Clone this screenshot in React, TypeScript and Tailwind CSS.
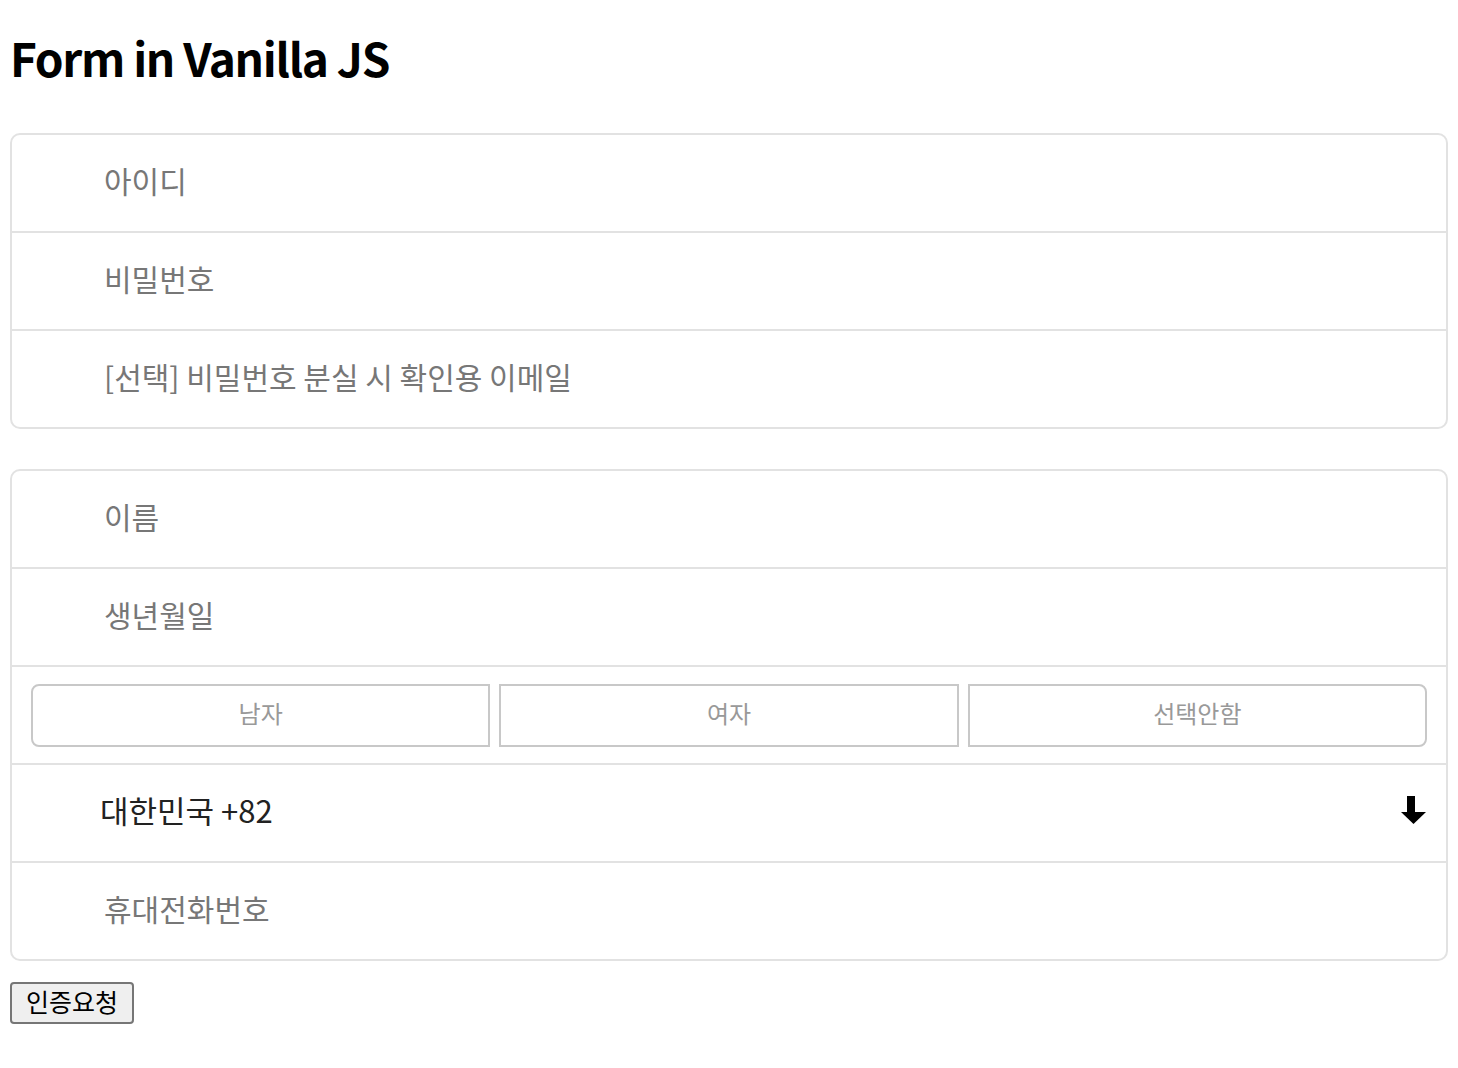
import React from "react"

const font = { fontFamily: '"Noto Sans CJK KR", "Noto Sans", sans-serif' }

function TextRow({ placeholder, last }: { placeholder: string; last?: boolean }) {
  return (
    <div className={`flex items-center ${last ? "h-[96px]" : "h-[98px] border-b-2 border-[#e2e2e2]"}`}>
      <input
        placeholder={placeholder}
        className="h-full w-full bg-transparent pb-[6px] pl-[92px] text-[30px] text-[#222] outline-none placeholder:text-[#777]"
        style={font}
      />
    </div>
  )
}

function DownArrow() {
  return (
    <svg width="26" height="28" viewBox="0 0 26 28" className="shrink-0">
      <rect x="6" y="0" width="8" height="17" fill="#000" />
      <polygon points="0,16 25,16 12.5,28" fill="#000" />
    </svg>
  )
}

export default function App() {
  return (
    <div className="min-h-screen bg-white px-[10px] pt-[29px]" style={font}>
      <h1 className="text-[46px] font-bold leading-[56px] tracking-[-1.3px] text-black">Form in Vanilla JS</h1>

      <form className="mt-[48px]" onSubmit={(e) => e.preventDefault()}>
        <div className="overflow-hidden rounded-[10px] border-2 border-[#e2e2e2]">
          <TextRow placeholder="아이디" />
          <TextRow placeholder="비밀번호" />
          <TextRow placeholder="[선택] 비밀번호 분실 시 확인용 이메일" last />
        </div>

        <div className="mt-[40px] overflow-hidden rounded-[10px] border-2 border-[#e2e2e2]">
          <TextRow placeholder="이름" />
          <TextRow placeholder="생년월일" />
          <div className="flex h-[98px] items-center gap-[9px] border-b-2 border-[#e2e2e2] px-[19px]">
            {["남자", "여자", "선택안함"].map((label, i) => (
              <button
                key={label}
                type="button"
                className={`flex h-[63px] flex-1 items-center justify-center border-2 border-[#c8c8c8] bg-white pb-[5px] text-[24px] text-[#999] ${
                  i === 0 ? "rounded-l-[8px]" : i === 2 ? "rounded-r-[8px]" : ""
                }`}
              >
                {label}
              </button>
            ))}
          </div>
          <div className="flex h-[98px] items-center justify-between border-b-2 border-[#e2e2e2] pb-[6px] pl-[88px] pr-[19px]">
            <span className="text-[31px] text-[#222]">대한민국 +82</span>
            <DownArrow />
          </div>
          <TextRow placeholder="휴대전화번호" last />
        </div>

        <button
          type="submit"
          className="mt-[21px] h-[42px] rounded-[4px] border-2 border-[#767676] bg-[#efefef] px-[14px] pb-[4px] text-[25px] leading-none text-black"
        >
          인증요청
        </button>
      </form>
    </div>
  )
}
